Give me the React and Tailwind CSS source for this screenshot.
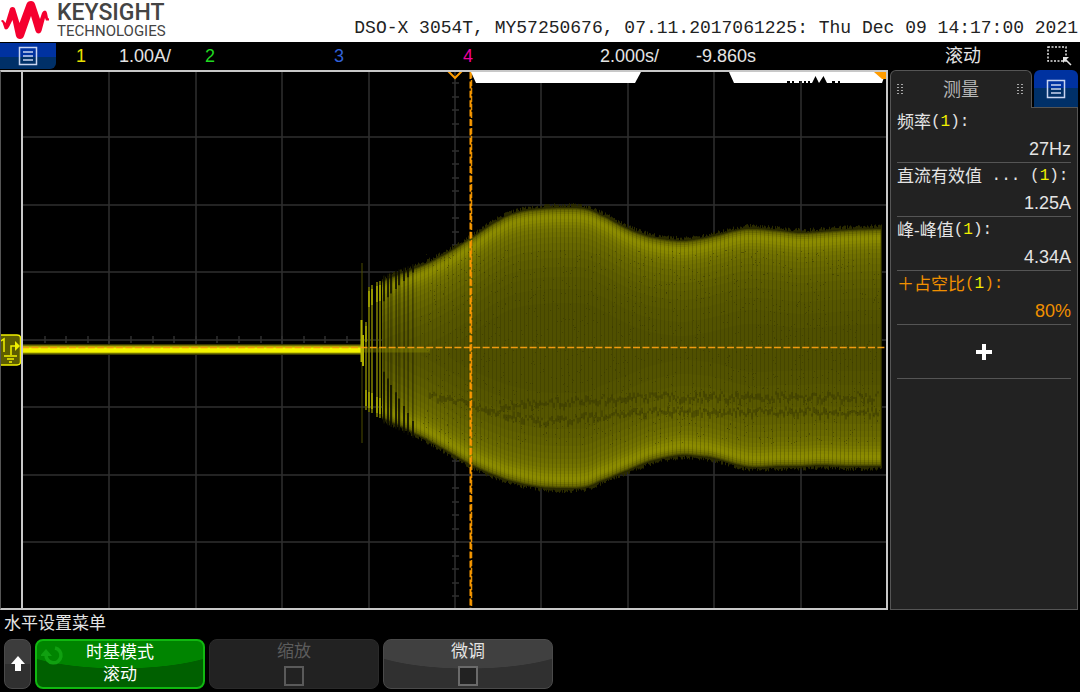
import React from "react";

const CJK = "font-['Liberation_Sans','Noto_Sans_CJK_SC',sans-serif]";

// [x, top, bottom] of the captured signal
const ENVELOPE = [
  [366, 289, 410], [380, 281, 418], [400, 273, 427], [413, 268, 434], [440, 256, 448],
  [470, 238, 465], [500, 219, 478], [520, 211, 484], [541, 208, 488], [565, 207, 489],
  [585, 208, 488], [600, 214, 482], [628, 228, 471], [650, 236, 462], [680, 240, 456],
  [700, 238, 457], [714, 235, 459], [740, 229, 466], [755, 228, 468], [780, 230, 467],
  [800, 232, 467], [820, 231, 466], [850, 229, 467], [881, 228, 467],
];

// inset from the envelope edge -> phosphor intensity
const LAYERS = [
  [0, "#2a2a00"], [1, "#444400"], [2, "#5a5a00"], [3, "#6c6c00"], [5, "#7c7c00"],
  [7, "#888800"], [9, "#8c8c00"], [12, "#888800"], [15, "#808000"], [18, "#7a7a00"],
  [21, "#747400"], [25, "#6f6f00"], [30, "#6a6a00"], [36, "#666600"], [43, "#616100"],
  [51, "#5d5d00"], [60, "#595900"], [70, "#565600"], [82, "#535300"], [96, "#505000"],
];

const noise = (n) => {
  const v = Math.sin(n * 127.1 + 11.7) * 43758.5453;
  return v - Math.floor(v);
};

const catmull = (a, b, c, d, t) =>
  0.5 * (2 * b + (c - a) * t + (2 * a - 5 * b + 4 * c - d) * t * t + (3 * b - a - 3 * c + d) * t * t * t);

function edgeAt(x) {
  let i = ENVELOPE.findIndex((p) => p[0] >= x);
  if (i < 1) i = 1;
  const p = (k) => ENVELOPE[Math.min(Math.max(k, 0), ENVELOPE.length - 1)];
  const t = (x - p(i - 1)[0]) / (p(i)[0] - p(i - 1)[0]);
  return [1, 2].map((c) => catmull(p(i - 2)[c], p(i - 1)[c], p(i)[c], p(i + 1)[c], t));
}

const COLUMNS = [];
for (let x = 382; x <= 881; x += 1) COLUMNS.push([x, ...edgeAt(x)]);

// layers never cross the middle of the trace where it is still narrow
function layerPath(inset) {
  const cols = COLUMNS.filter(([, t, b]) => (b - t) / 2 > inset + 4);
  const up = cols.map(([x, t]) => `${x},${(t + inset).toFixed(1)}`);
  const down = [...cols].reverse().map(([x, , b]) => `${x},${(b - inset).toFixed(1)}`);
  return `M${up.join("L")}L${down.join("L")}Z`;
}

const FUZZ = COLUMNS.map(([x, t, b]) => {
  const h = noise(x) * 4;
  const k = noise(x + 900) * 4;
  return `M${x + 0.5} ${(t - h).toFixed(1)}V${(b + k).toFixed(1)}`;
}).join("");

// separate switching pulses before the trace closes up
const PULSES = [
  [366, 322, 410], [369, 287, 412], [372, 285, 413], [377, 282, 417],
  [380, 281, 418],
];
const GAPS = [384, 388, 391, 396, 399, 404, 408, 413];

const STRIPES = COLUMNS.filter(([x]) => x % 4 === 0)
  .map(([x, t, b]) => `M${x + 0.5} ${(t + 2).toFixed(1)}V${(b - 2).toFixed(1)}`)
  .join("");

const SPECKS = Array.from({ length: 1500 }, (_, i) => {
  const x = Math.floor(420 + noise(i) * 460);
  const y = Math.floor(250 + noise(i + 5000) * 195);
  return `M${x} ${y + 0.5}h1`;
}).join("");

const band = (from, to, y, spread, seed) => {
  let d = "";
  for (let x = from; x < to; x += 2) {
    d += `M${x} ${(y(x) + (noise(x + seed) - 0.5) * spread).toFixed(1)}v${(2 + noise(x * 3 + seed) * 5).toFixed(1)}`;
  }
  return d;
};
const DIP = (x) => (x < 540 ? 393 + (x - 430) * 0.25 : 420 - Math.min((x - 540) * 0.1, 10));
const BANDS =
  band(430, 880, DIP, 7, 1) +
  band(500, 880, (x) => 404 - Math.min((x - 500) * 0.06, 9), 8, 70);

function Grid() {
  const vertical = [1, 2, 3, 4, 5, 6, 7, 8, 9].map((n) => Math.round(23 + n * 86.4));
  const horizontal = [1, 2, 3, 4, 5, 6, 7].map((n) => Math.round(69.5 + n * 67.5));
  const ticksX = Array.from({ length: 39 }, (_, i) => Math.round(23 + (i + 1) * 21.6));
  const ticksY = Array.from({ length: 39 }, (_, i) => Math.round(69.5 + (i + 1) * 13.5));
  return (
    <g stroke="#2f2f2f" strokeWidth="1.5">
      {vertical.map((x) => <path key={x} d={`M${x} 72V608`} />)}
      {horizontal.map((y) => <path key={y} d={`M22 ${y}H886`} />)}
      {ticksX.map((x) => <path key={x} d={`M${x} 336V343`} />)}
      {ticksY.map((y) => <path key={y} d={`M452 ${y}H459`} />)}
    </g>
  );
}

function Trace() {
  return (
    <g fill="none">
      <path d="M22 349.5H361" stroke="#3a3a00" strokeWidth="11" />
      <path d="M22 349.5H361" stroke="#a8a800" strokeWidth="8" />
      <path d="M22 350H361" stroke="#f4f400" strokeWidth="5" />
      <path d={FUZZ} stroke="#2a2a00" />
      {LAYERS.map(([inset, color]) => <path key={inset} d={layerPath(inset)} fill={color} />)}
      <path d={STRIPES} stroke="#2c2c00" strokeOpacity="0.28" />
      <path d={SPECKS} stroke="#333300" strokeOpacity="0.5" />
      <path d={BANDS} stroke="#333300" strokeOpacity="0.4" strokeWidth="2" />
      <path d="M362 263V443" stroke="#4c4c00" />
      <path d="M361.500 320V362M363 335V366" stroke="#b0b000" strokeWidth="2" />
      {PULSES.map(([x, t, b]) => (
        <g key={x}>
          <path d={`M${x} ${t}V${b}`} stroke="#626200" strokeWidth="2" />
          <path d={`M${x} ${t + 4}v16M${x} ${b - 20}v16`} stroke="#989800" strokeWidth="2" />
        </g>
      ))}
      {GAPS.map((x, i) => {
        const [t, b] = edgeAt(x);
        const reach = 52 - i * 5;
        return (
          <g key={x} stroke="#0c0c00" strokeWidth="1.5">
            <path d={`M${x} ${t - 4}v${reach * 0.5}M${x} ${b + 4}v${-reach}`} />
            <path d={`M${x} ${t}V${b}`} strokeOpacity="0.4" />
          </g>
        );
      })}
      <path d="M364 350H430" stroke="#8c8c00" strokeOpacity="0.4" strokeWidth="5" />
    </g>
  );
}

function Plot() {
  return (
    <svg viewBox="23 72 863 536" preserveAspectRatio="none" className="block h-full w-full" aria-label="CH1">
      <Grid />
      <Trace />
      <path d="M22 347.500H886" stroke="#f09a10" strokeWidth="1.500" strokeDasharray="7 2.400" />
      <path d="M470.500 72V608" stroke="#ff9c00" strokeWidth="2" strokeDasharray="7 2.400" />
      <path d="M471.500 72V608" stroke="#e88e00" strokeWidth="1.500" strokeDasharray="6 2" />
      <path d="M471 72L476 83H635L641 72Z" fill="#fff" />
      <path d="M729 72L734 83H787V81h3v2h2v-2h2v2h5v-2h3v2h2v-2h2v2h2v-2h2v2h2L815.500 76L819 83L823.500 76L827 83H832V81h3v2h3v-2h2v2H882L886 72Z" fill="#fff" />
      <path d="M874 72H886V79L882 79Z" fill="#ff9c00" />
      <path d="M448 71L455 78L462 71" fill="none" stroke="#ff9c00" strokeWidth="2" />
    </svg>
  );
}

function ListIcon() {
  return (
    <svg viewBox="0 0 20 20" className="h-5 w-5" fill="none" stroke="#c8d4f0" strokeWidth="1.500">
      <path d="M1.500 1.500H18.500V18.500H1.500ZM5 6H15M5 10H15M5 14H15" />
    </svg>
  );
}

function Grip() {
  return (
    <svg viewBox="0 0 8 12" className="h-3 w-2" fill="#a8a8a8">
      {[0, 4].map((x) => [0, 3, 6, 9].map((y) => <rect key={`${x}-${y}`} x={x} y={y} width="2" height="1" />))}
    </svg>
  );
}

function Measurement({ name, value, active }) {
  return (
    <li className={`h-[54px] border-b border-[#555] leading-[27px] whitespace-nowrap ${active ? "text-[#f09000]" : "text-[#e4e4e4]"}`}>
      <div className="flex h-[27px] items-center text-[17px]">
        <span>{name}</span>
        <span className="whitespace-pre font-['Liberation_Mono',monospace] text-[16px]">
          {name === "直流有效值" && " ... "}(<span className="text-[#f0f000]">1</span>):
        </span>
      </div>
      <div className="h-[27px] text-right text-[18px]">{value}</div>
    </li>
  );
}

const CHANNELS = [
  { id: 1, color: "text-[#e8e000]", scale: "1.00A/" },
  { id: 2, color: "text-[#20d820]" },
  { id: 3, color: "text-[#3060d8]" },
  { id: 4, color: "text-[#f000a0]" },
];

export default function App() {
  return (
    <div className={`flex h-screen flex-col overflow-hidden bg-black text-[18px] leading-none text-[#e4e4e4] ${CJK}`}>
      <header className="flex h-[42px] shrink-0 items-start justify-between bg-white pr-0.5">
        <div className="flex gap-2 pl-px font-['Roboto',sans-serif] text-[#444]">
          <svg viewBox="0 0 48 40" className="h-10 w-12" fill="#f5002f">
            <path d="M0 21Q1.500 19 3 21L4.500 23L8.500 10Q9 7 11.500 7Q14 7 14.500 10L18.500 23L25.500 4Q26.500 1 30 1Q33 1 34 4L39 19L41 13Q42 10.500 44 10.500Q45.500 10.500 46 13L47 18Q49 19 48 20.500H45L44 18L40.500 31Q39.500 33.500 37.500 33.500Q35.500 33.500 34.500 31L30 16L23 36Q22 39 19 39Q16 39 15 36L11.500 20L8 27Q6.500 29.500 5 29.500Q3.500 29.500 3 27L1.500 22.500Z" />
          </svg>
          <div className="pt-0.5">
            <div className="text-[23px] leading-[22px] font-medium">KEYSIGHT</div>
            <div className="text-[15px] leading-[14px]">TECHNOLOGIES</div>
          </div>
        </div>
        <div className="pt-[18px] font-['Liberation_Mono',monospace] text-[18px] leading-5 whitespace-nowrap text-[#222]">
          DSO-X 3054T, MY57250676, 07.11.2017061225: Thu Dec 09 14:17:00 2021
        </div>
      </header>

      <div className="flex h-7 shrink-0 items-center">
        <button aria-label="菜单" className="flex h-[26px] w-14 items-center justify-center rounded-br-md bg-linear-to-b from-[#0032a0] from-55% to-[#003068] to-55%">
          <ListIcon />
        </button>
        <div className="grid flex-1 grid-cols-[129fr_129fr_129fr_129fr_316fr] items-center">
          {CHANNELS.map((c) => (
            <div key={c.id} className="flex pl-5">
              <span className={`w-[43px] ${c.color}`}>{c.id}</span>
              <span>{c.scale}</span>
            </div>
          ))}
          <div className="flex pl-7">
            <span className="w-24">2.000s/</span>
            <span>-9.860s</span>
          </div>
        </div>
        <div className="flex w-48 items-center">
          <span className="flex-1 text-center">滚动</span>
          <button aria-label="选择" className="flex w-[42px] justify-center">
            <svg viewBox="0 0 26 22" className="h-[22px] w-[26px]" fill="none" stroke="#e4e4e4">
              <path d="M2 2H20V16H2Z" strokeWidth="1.500" strokeDasharray="2 1.500" />
              <path d="M19 14L25 20" strokeWidth="1.500" />
              <path d="M17 12H23L17 18Z" fill="#e4e4e4" stroke="none" />
            </svg>
          </button>
        </div>
      </div>

      <main className="flex min-h-0 flex-1">
        <div className="flex min-w-0 flex-1 border-y-2 border-r-2 border-l border-y-[#c8c8c8] border-r-[#c8c8c8] border-l-[#555]">
          <div className="flex w-5 shrink-0 items-center pt-5">
            <svg viewBox="0 0 20 32" className="h-8 w-5" fill="none" stroke="#f0f000">
              <path d="M0 1H16Q19.500 1 19.500 4V28Q19.500 31 16 31H0" fill="#5c5c00" strokeWidth="1.500" />
              <path d="M0 7L3 5V18" strokeWidth="1.500" />
              <path d="M10 21V12H15M3 22H16M6 25H13M8 28H11" strokeWidth="1.500" />
              <path d="M14 7L19 12L14 17Z" fill="#f0f000" stroke="none" />
            </svg>
          </div>
          <div className="min-w-0 flex-1 border-l-2 border-[#c8c8c8]">
            <Plot />
          </div>
        </div>

        <aside className="flex w-48 shrink-0 flex-col px-0.5">
          <div className="flex h-[38px] shrink-0">
            <h2 className="flex flex-1 items-center justify-between rounded-t-md border border-b-0 border-[#555] bg-[#222] px-1.5 text-[#b8b8b8]">
              <Grip />
              <span>测量</span>
              <Grip />
            </h2>
            <div className="w-[46px] border-b border-[#555] pl-0.5">
              <button aria-label="测量菜单" className="flex h-full w-full items-center justify-center rounded-t-md bg-linear-to-b from-[#0032a0] from-50% to-[#003068] to-50%">
                <ListIcon />
              </button>
            </div>
          </div>
          <div className="flex-1 border border-t-0 border-[#555] bg-[#222] px-1.5 pt-px">
            <ul>
              <Measurement name="频率" value="27Hz" />
              <Measurement name="直流有效值" value="1.25A" />
              <Measurement name="峰-峰值" value="4.34A" />
              <Measurement name="＋占空比" value="80%" active />
            </ul>
            <button aria-label="添加测量" className="flex h-[54px] w-full items-center justify-center border-b border-[#555]">
              <svg viewBox="0 0 16 16" className="h-4 w-4" stroke="#fff" strokeWidth="4">
                <path d="M8 0V16M0 8H16" />
              </svg>
            </button>
          </div>
        </aside>
      </main>

      <footer className="shrink-0 px-1 pb-[3px]">
        <div className="h-[29px] text-[17px] leading-7">水平设置菜单</div>
        <div className="flex h-[50px] gap-1">
          <button aria-label="返回" className="flex w-[27px] items-center justify-center rounded-lg border border-[#4a4a4a] bg-linear-to-b from-[#3c3c3c] from-50% to-[#303030] to-50%">
            <svg viewBox="0 0 14 16" className="h-4 w-3.5" fill="#fff">
              <path d="M7 0L14 8H10V15H4V8H0Z" />
            </svg>
          </button>
          <button className="relative w-[170px] rounded-lg border-2 border-[#10b810] bg-[radial-gradient(ellipse_67%_60%_at_50%_0%,#008400_98%,#006000_100%)] text-[17px] text-white">
            <svg viewBox="0 0 24 20" className="absolute top-1 left-1 h-5 w-6" fill="none" stroke="#10a010" strokeWidth="3.500">
              <path d="M5 10A7.500 7.500 0 1 0 14 3" />
              <path d="M-1 11L5 4L11 11Z" fill="#10a010" stroke="none" />
            </svg>
            <span className="block leading-[22px]">时基模式</span>
            <span className="block leading-[22px]">滚动</span>
          </button>
          <label className="flex w-[170px] flex-col items-center rounded-lg border border-[#2a2a2a] bg-[#222] text-[17px] text-[#5c5c5c]">
            <span className="leading-6">缩放</span>
            <input type="checkbox" disabled className="mt-0.5 h-5 w-5 appearance-none border-2 border-[#5a5a5a] bg-[#222]" />
          </label>
          <label className="flex w-[170px] flex-col items-center rounded-lg border border-[#4a4a4a] bg-[radial-gradient(ellipse_67%_60%_at_50%_0%,#404040_98%,#303030_100%)] text-[17px]">
            <span className="leading-6">微调</span>
            <input type="checkbox" className="mt-0.5 h-5 w-5 appearance-none border-2 border-[#6a6a6a] bg-[#222]" />
          </label>
        </div>
      </footer>
    </div>
  );
}
